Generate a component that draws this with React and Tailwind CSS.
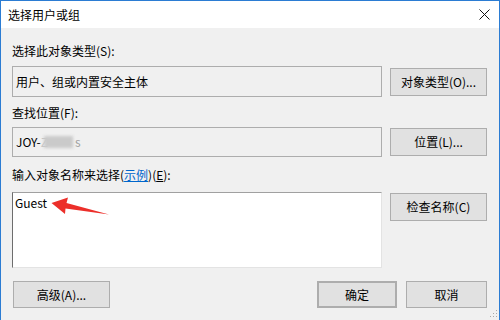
import React from "react";

// Small helper for the grey Windows-style push buttons
const WinButton = ({ children, className = "" }) => (
  <div
    className={`flex items-center justify-center bg-[#e1e1e1] border border-[#adadad] text-[12px] leading-[16px] text-black ${className}`}
  >
    {children}
  </div>
);

const SelectUsersDialog = () => {
  return (
    <div className="relative w-[500px] h-[320px] overflow-hidden bg-[#f0f0f0] border-t border-l border-r border-[#2b7cd3] font-['Noto_Sans_CJK_SC','Microsoft_YaHei',sans-serif] text-black">
      {/* Title bar */}
      <div className="flex h-[27px] items-center justify-between bg-white pl-[7px] pr-[9px]">
        <span className="text-[12px] leading-[16px]">选择用户或组</span>
        <svg width="11" height="11" viewBox="0 0 11 11" className="mb-[1px]">
          <path d="M0.5 0.5 L10.5 10.5 M10.5 0.5 L0.5 10.5" stroke="#111" strokeWidth="1" fill="none" />
        </svg>
      </div>

      <div className="pl-[11px] pr-[12px]">
        {/* Object type */}
        <div className="mt-[15px] text-[12px] leading-[16px]">选择此对象类型(S):</div>
        <div className="mt-[7px] flex gap-[8px]">
          <div className="flex h-[31px] w-[370px] items-center border border-[#adadad] px-[3px] text-[12px] leading-[16px]">
            用户、组或内置安全主体
          </div>
          <WinButton className="mt-[2px] h-[28px] w-[97px]">对象类型(O)...</WinButton>
        </div>

        {/* Location */}
        <div className="mt-[8px] text-[12px] leading-[16px]">查找位置(F):</div>
        <div className="mt-[6px] flex gap-[8px]">
          <div className="flex h-[30px] w-[370px] items-center border border-[#adadad] px-[3px] text-[12px] leading-[16px]">
            <span>JOY-</span>
            <span className="text-[#c4c4c4]">Z</span>
            <span className="ml-[-4px] h-[12px] w-[29px] bg-[#cacaca] blur-[1.5px]"></span>
            <span className="ml-[2px] text-[#a0a0a0]">s</span>
          </div>
          <WinButton className="mt-[1px] h-[28px] w-[97px]">位置(L)...</WinButton>
        </div>

        {/* Object names */}
        <div className="mt-[10px] text-[12px] leading-[16px]">
          输入对象名称来选择(<span className="text-[#0066cc] underline">示例</span>)(<span className="underline">E</span>):
        </div>
        <div className="mt-[9px] flex gap-[8px]">
          <div className="relative h-[76px] w-[370px] border border-t-[#a0a0a0] border-l-[#6d6d6d] border-r-[#e3e3e3] border-b-[#e3e3e3] bg-white px-[2px] pt-[2px] text-[12px] leading-[16px]">
            Guest
            {/* red annotation arrow */}
            <svg width="100" height="26" viewBox="0 0 100 26" className="absolute left-0 top-0">
              <polygon
                points="38.5,10 55,4.5 53.5,10 96,21.5 52.5,15.5 52,21"
                fill="#ec2f2a"
              />
            </svg>
          </div>
          <WinButton className="mt-[1px] h-[28px] w-[97px]">检查名称(C)</WinButton>
        </div>

        {/* Bottom buttons */}
        <div className="mt-[13px] flex">
          <WinButton className="ml-[1px] h-[27px] w-[97px]">高级(A)...</WinButton>
          <WinButton className="ml-auto h-[27px] w-[80px] border-2 border-[#0078d7]">确定</WinButton>
          <WinButton className="ml-[9px] h-[27px] w-[81px]">取消</WinButton>
        </div>
      </div>

      {/* size grip */}
      <svg width="8" height="8" viewBox="0 0 8 8" className="absolute bottom-[2px] right-[1px]">
        <rect x="6" y="0" width="1" height="1" fill="#a8a8a8" />
        <rect x="3" y="3" width="1" height="1" fill="#a8a8a8" />
        <rect x="6" y="3" width="1" height="1" fill="#a8a8a8" />
        <rect x="0" y="6" width="1" height="1" fill="#a8a8a8" />
        <rect x="3" y="6" width="1" height="1" fill="#a8a8a8" />
        <rect x="6" y="6" width="1" height="1" fill="#a8a8a8" />
      </svg>
    </div>
  );
};

const App = () => {
  return <SelectUsersDialog />;
};

export default App;
